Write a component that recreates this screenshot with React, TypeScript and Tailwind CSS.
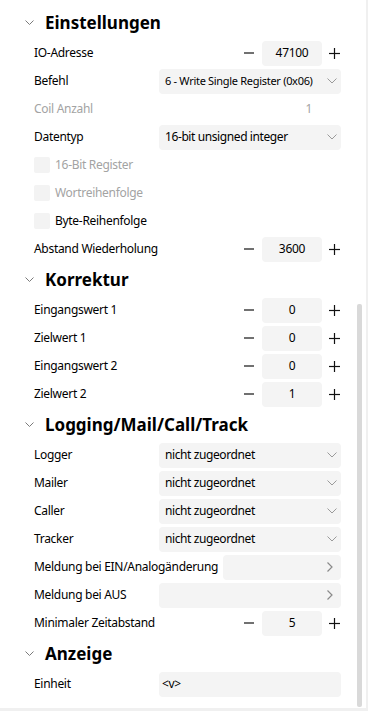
import React from "react";

const Chevron = () => (
  <svg width="10" height="6" viewBox="0 0 10 6" className="shrink-0">
    <path d="M0.5 0.5 L5 5 L9.5 0.5" fill="none" stroke="#9a9a9a" strokeWidth="1" />
  </svg>
);

const ChevronRight = () => (
  <svg width="6" height="10" viewBox="0 0 6 10" className="shrink-0">
    <path d="M0.5 0.5 L5 5 L0.5 9.5" fill="none" stroke="#8a8a8a" strokeWidth="1.2" />
  </svg>
);

function SectionHeader({ title }: { title: string }) {
  return (
    <div className="h-[33px] flex items-center pl-[25px]">
      <svg width="9" height="6" viewBox="0 0 9 6" className="shrink-0">
        <path d="M0.5 0.5 L4.5 4.5 L8.5 0.5" fill="none" stroke="#7a7a7a" strokeWidth="1" />
      </svg>
      <span className="ml-[11px] text-[17px] font-bold text-black leading-none tracking-[0px]">{title}</span>
    </div>
  );
}

function Row({ label, muted, children }: { label: string; muted?: boolean; children?: React.ReactNode }) {
  return (
    <div className="h-[28px] flex items-center pl-[34px]">
      <span className={`min-w-[125px] shrink-0 whitespace-nowrap pr-[5px] ${muted ? "text-[#a3a3a3]" : "text-black"}`}>
        {label}
      </span>
      <div className="flex-1 flex items-center min-w-0">{children}</div>
    </div>
  );
}

function Select({ value, small }: { value: string; small?: boolean }) {
  return (
    <div className="flex-1 h-[25px] rounded-[4px] bg-[#f4f4f4] flex items-center pl-[6px] pr-[4px]">
      <span
        className={`flex-1 whitespace-nowrap overflow-hidden ${small ? "text-[11px] tracking-[-0.3px]" : "tracking-[-0.4px]"}`}
      >
        {value}
      </span>
      <Chevron />
    </div>
  );
}

function Stepper({ value }: { value: string }) {
  return (
    <div className="ml-auto flex items-center">
      <svg width="10" height="2" viewBox="0 0 10 2">
        <line x1="0" y1="1" x2="10" y2="1" stroke="#111" strokeWidth="1.2" />
      </svg>
      <div className="ml-[8px] w-[60px] h-[25px] rounded-[4px] bg-[#f4f4f4] flex items-center justify-center">
        {value}
      </div>
      <svg width="11" height="11" viewBox="0 0 11 11" className="ml-[7px] mr-[1px]">
        <line x1="0" y1="5.5" x2="11" y2="5.5" stroke="#111" strokeWidth="1.2" />
        <line x1="5.5" y1="0" x2="5.5" y2="11" stroke="#111" strokeWidth="1.2" />
      </svg>
    </div>
  );
}

function LinkBox() {
  return (
    <div className="flex-1 h-[25px] rounded-[4px] bg-[#f4f4f4] flex items-center justify-end pr-[8px]">
      <ChevronRight />
    </div>
  );
}

function CheckRow({ label, muted }: { label: string; muted?: boolean }) {
  return (
    <div className="h-[28px] flex items-center pl-[34px]">
      <div className="w-[16px] h-[16px] rounded-[2px] bg-[#f3f3f3]" />
      <span className={`ml-[5px] ${muted ? "text-[#a3a3a3]" : "text-black"}`}>{label}</span>
    </div>
  );
}

export default function App() {
  return (
    <div className="relative w-[368px] h-[711px] overflow-hidden bg-white font-['Noto_Sans','Open_Sans',sans-serif] text-[12px] tracking-[-0.3px] text-black">
      <div className="pt-[6px] pr-[27px]">
        <SectionHeader title="Einstellungen" />
        <Row label="IO-Adresse">
          <Stepper value="47100" />
        </Row>
        <Row label="Befehl">
          <Select value="6 - Write Single Register (0x06)" small />
        </Row>
        <Row label="Coil Anzahl" muted>
          <span className="ml-auto pr-[29px] text-[#a3a3a3]">1</span>
        </Row>
        <Row label="Datentyp">
          <Select value="16-bit unsigned integer" />
        </Row>
        <CheckRow label="16-Bit Register" muted />
        <CheckRow label="Wortreihenfolge" muted />
        <CheckRow label="Byte-Reihenfolge" />
        <Row label="Abstand Wiederholung">
          <Stepper value="3600" />
        </Row>

        <SectionHeader title="Korrektur" />
        <Row label="Eingangswert 1">
          <Stepper value="0" />
        </Row>
        <Row label="Zielwert 1">
          <Stepper value="0" />
        </Row>
        <Row label="Eingangswert 2">
          <Stepper value="0" />
        </Row>
        <Row label="Zielwert 2">
          <Stepper value="1" />
        </Row>

        <SectionHeader title="Logging/Mail/Call/Track" />
        <Row label="Logger">
          <Select value="nicht zugeordnet" />
        </Row>
        <Row label="Mailer">
          <Select value="nicht zugeordnet" />
        </Row>
        <Row label="Caller">
          <Select value="nicht zugeordnet" />
        </Row>
        <Row label="Tracker">
          <Select value="nicht zugeordnet" />
        </Row>
        <Row label="Meldung bei EIN/Analogänderung">
          <LinkBox />
        </Row>
        <Row label="Meldung bei AUS">
          <LinkBox />
        </Row>
        <Row label="Minimaler Zeitabstand">
          <Stepper value="5" />
        </Row>

        <SectionHeader title="Anzeige" />
        <Row label="Einheit">
          <div className="flex-1 h-[25px] rounded-[4px] bg-[#f4f4f4] flex items-center pl-[3px]">&lt;v&gt;</div>
        </Row>
      </div>

      {/* scrollbar */}
      <div className="absolute left-[357px] top-[304px] w-[5px] h-[403px] rounded-[2px] bg-[#d9d9d9]" />
      <div className="absolute right-0 top-0 bottom-0 w-[2px] bg-[#f0f0f0]" />
      <div className="absolute left-0 right-0 bottom-0 h-[3px] bg-[#f0f0f0]" />
    </div>
  );
}
